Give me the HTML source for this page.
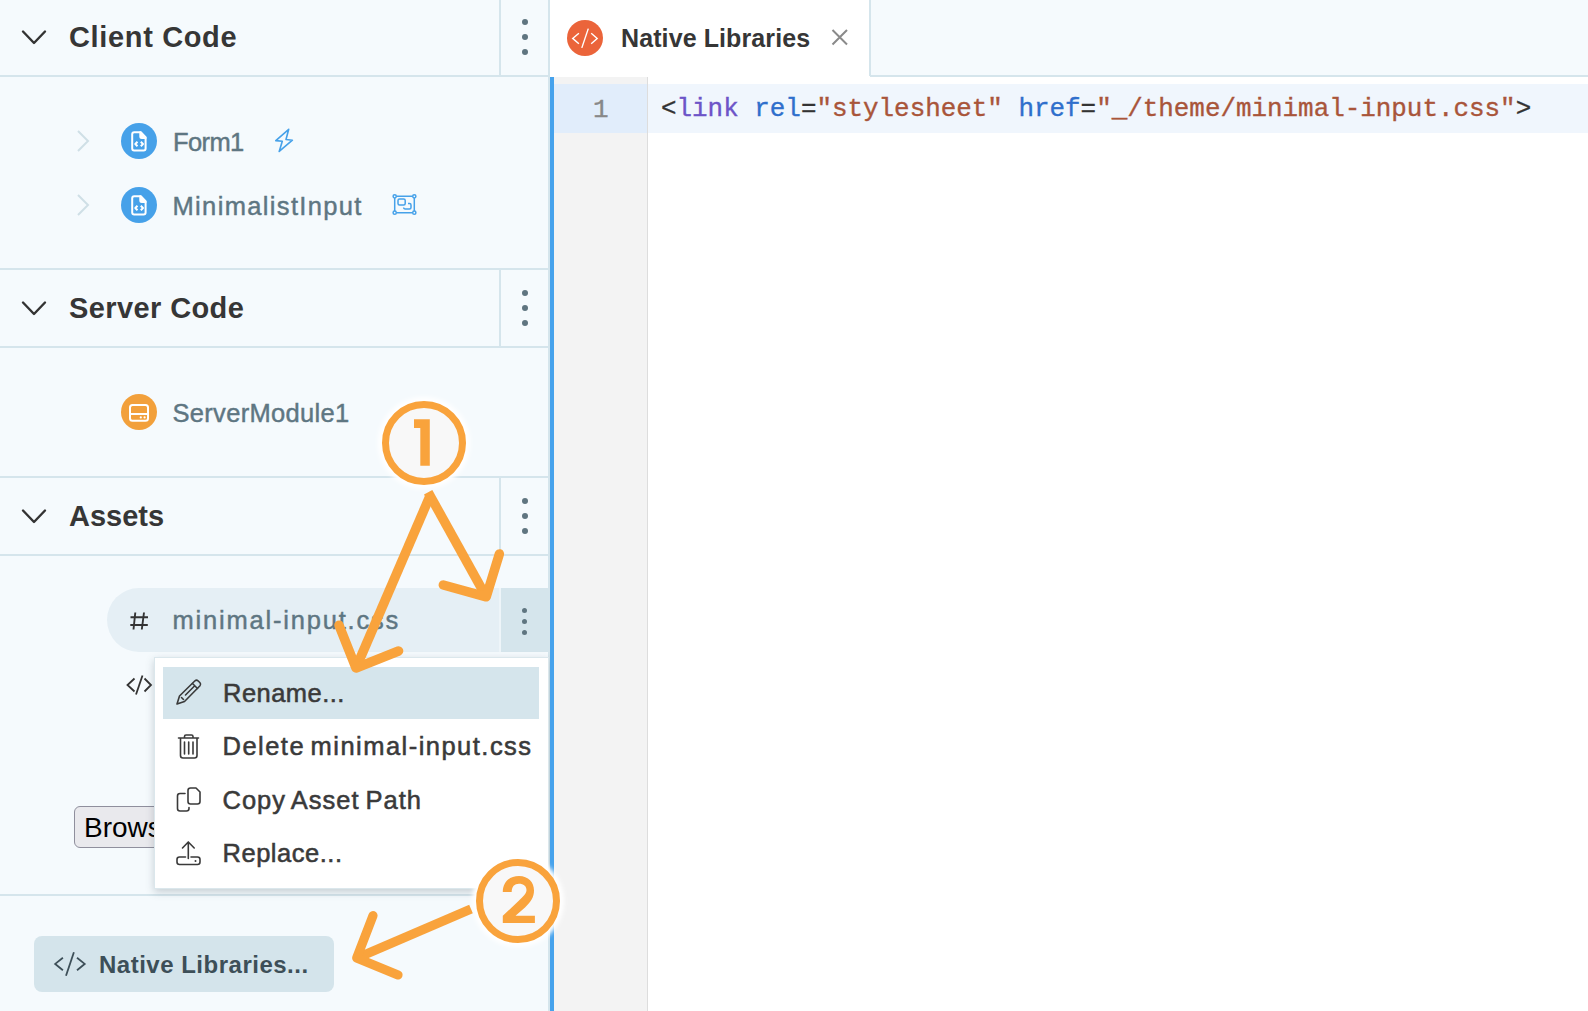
<!DOCTYPE html>
<html><head><meta charset="utf-8">
<style>
html,body{margin:0;padding:0;width:1588px;height:1011px;overflow:hidden;background:#fff;}
body{position:relative;font-family:"Liberation Sans",sans-serif;}
.a{position:absolute;}
.t{position:absolute;white-space:pre;line-height:1;}
.hl{position:absolute;background:#d5e5ec;}
.hdr{font-weight:700;font-size:29px;color:#363636;}
.item{font-size:25.5px;color:#5e7682;-webkit-text-stroke:0.45px #5e7682;}
.menu{font-size:25.5px;color:#3a3a3a;-webkit-text-stroke:0.55px #3a3a3a;}
.dot{position:absolute;width:6px;height:6px;border-radius:50%;background:#5f7580;}
.sdot{position:absolute;width:5px;height:5px;border-radius:50%;background:#5f7580;}
svg{position:absolute;overflow:visible;}
</style></head>
<body>
<!-- sidebar background -->
<div class="a" style="left:0;top:0;width:548px;height:1011px;background:#f5fafd;"></div>
<div class="hl" style="left:548px;top:0;width:2px;height:1011px;"></div>

<!-- Client Code header -->
<div class="hl" style="left:0;top:75px;width:548px;height:2px;"></div>
<div class="hl" style="left:499px;top:0;width:2px;height:75px;"></div>
<svg style="left:0;top:0" width="60" height="76"><polyline points="23,31.5 34,43 45,31.5" fill="none" stroke="#333" stroke-width="2.4" stroke-linecap="round" stroke-linejoin="round"/></svg>
<div class="t hdr" style="left:69px;top:22.5px;letter-spacing:0.65px;">Client Code</div>
<div class="dot" style="left:522px;top:19px;"></div>
<div class="dot" style="left:522px;top:34px;"></div>
<div class="dot" style="left:522px;top:49px;"></div>

<!-- Client items -->
<svg style="left:0;top:0" width="100" height="230">
 <polyline points="78,131 88,141 78,151" fill="none" stroke="#cfdfe6" stroke-width="2"/>
 <polyline points="78,195 88,205 78,215" fill="none" stroke="#cfdfe6" stroke-width="2"/>
</svg>
<div class="a" style="left:121px;top:123px;width:36px;height:36px;border-radius:50%;background:#46a1e9;"></div>
<div class="a" style="left:121px;top:187px;width:36px;height:36px;border-radius:50%;background:#46a1e9;"></div>
<svg style="left:0;top:0" width="160" height="230">
 <g fill="none" stroke="#fff" stroke-width="2" stroke-linejoin="round">
  <path d="M134.2,132.3 H140.8 L145.6,137.1 V148.4 Q145.6,150.4 143.6,150.4 H134.2 Q132.2,150.4 132.2,148.4 V134.3 Q132.2,132.3 134.2,132.3 Z"/>
  <path d="M140.3,132.3 V136.5 Q140.3,138 141.8,138 H145.6 Z" fill="#fff"/>
  <polyline points="137.5,141.8 135.3,144 137.5,146.2" stroke-width="2"/>
  <polyline points="140.8,141.8 143,144 140.8,146.2" stroke-width="2"/>
 </g>
 <g fill="none" stroke="#fff" stroke-width="2" stroke-linejoin="round" transform="translate(0,64)">
  <path d="M134.2,132.3 H140.8 L145.6,137.1 V148.4 Q145.6,150.4 143.6,150.4 H134.2 Q132.2,150.4 132.2,148.4 V134.3 Q132.2,132.3 134.2,132.3 Z"/>
  <path d="M140.3,132.3 V136.5 Q140.3,138 141.8,138 H145.6 Z" fill="#fff"/>
  <polyline points="137.5,141.8 135.3,144 137.5,146.2" stroke-width="2"/>
  <polyline points="140.8,141.8 143,144 140.8,146.2" stroke-width="2"/>
 </g>
</svg>
<div class="t item" style="left:173px;top:130px;letter-spacing:-0.6px;">Form1</div>
<div class="t item" style="left:172.5px;top:194px;letter-spacing:1.35px;">MinimalistInput</div>
<svg style="left:0;top:0" width="430" height="230">
 <path d="M288.7,129.3 L275.8,140.6 L282.3,141.3 L279.2,151.4 L292.4,140.2 L286,139.5 Z" fill="none" stroke="#46a1e9" stroke-width="1.6" stroke-linejoin="round"/>
 <g fill="none" stroke="#46a1e9" stroke-width="1.5">
  <path d="M396.5,196.3 H412.5 M414.3,198 V211 M412.5,212.7 H396.5 M394.7,211 V198"/>
  <circle cx="394.7" cy="196.3" r="1.6"/><circle cx="414.3" cy="196.3" r="1.6"/>
  <circle cx="394.7" cy="212.7" r="1.6"/><circle cx="414.3" cy="212.7" r="1.6"/>
  <rect x="398" y="199" width="7.2" height="6" rx="1.5"/>
  <path d="M408,203.6 H409.5 Q411,203.6 411,205 V207.5 Q411,209 409.5,209 H405 Q403.6,209 403.6,207.6"/>
 </g>
</svg>

<!-- Server Code header -->
<div class="hl" style="left:0;top:268px;width:548px;height:2px;"></div>
<div class="hl" style="left:0;top:346px;width:548px;height:2px;"></div>
<div class="hl" style="left:499px;top:268px;width:2px;height:78px;"></div>
<svg style="left:0;top:0" width="60" height="330"><polyline points="23,302.5 34,314 45,302.5" fill="none" stroke="#333" stroke-width="2.4" stroke-linecap="round" stroke-linejoin="round"/></svg>
<div class="t hdr" style="left:69px;top:293.5px;letter-spacing:0.4px;">Server Code</div>
<div class="dot" style="left:522px;top:290px;"></div>
<div class="dot" style="left:522px;top:305px;"></div>
<div class="dot" style="left:522px;top:320px;"></div>

<!-- Server items -->
<div class="a" style="left:121px;top:394px;width:36px;height:36px;border-radius:50%;background:#f2a03b;"></div>
<svg style="left:0;top:0" width="160" height="430">
 <g fill="none" stroke="#fff" stroke-width="2">
  <rect x="130" y="405" width="18" height="15.8" rx="2.5"/>
  <path d="M130,414 H148"/>
 </g>
 <circle cx="140.8" cy="417.4" r="1.1" fill="#fff"/><circle cx="144.6" cy="417.4" r="1.1" fill="#fff"/>
</svg>
<div class="t item" style="left:172.5px;top:401px;letter-spacing:0.31px;">ServerModule1</div>

<!-- Assets header -->
<div class="hl" style="left:0;top:476px;width:548px;height:2px;"></div>
<div class="hl" style="left:0;top:554px;width:548px;height:2px;"></div>
<div class="hl" style="left:499px;top:476px;width:2px;height:78px;"></div>
<svg style="left:0;top:0" width="60" height="540"><polyline points="23,510.5 34,522 45,510.5" fill="none" stroke="#333" stroke-width="2.4" stroke-linecap="round" stroke-linejoin="round"/></svg>
<div class="t hdr" style="left:69px;top:501.5px;">Assets</div>
<div class="dot" style="left:522px;top:498px;"></div>
<div class="dot" style="left:522px;top:513px;"></div>
<div class="dot" style="left:522px;top:528px;"></div>

<!-- asset row -->
<div class="a" style="left:107px;top:588px;width:393px;height:64px;border-radius:32px 0 0 32px;background:#e5eff5;"></div>
<div class="a" style="left:500px;top:588px;width:48px;height:64px;background:#d5e5ec;"></div>
<div class="a" style="left:499px;top:588px;width:1.5px;height:64px;background:#eef5f9;"></div>
<div class="sdot" style="left:522px;top:608px;"></div>
<div class="sdot" style="left:522px;top:619px;"></div>
<div class="sdot" style="left:522px;top:630px;"></div>
<svg style="left:0;top:0" width="160" height="700">
 <g fill="none" stroke="#333" stroke-width="2">
  <path d="M135.3,612.5 L133.5,629.5 M144,612.5 L141.8,629.5 M130.5,617.3 H148 M130.3,625 H147.8" stroke-width="1.9"/>
 </g>
 <g fill="none" stroke="#333" stroke-width="2">
  <polyline points="134.5,678.5 127.5,685 134.5,691.5" stroke-width="1.8"/>
  <path d="M142.5,675.5 L136,694.5" stroke-width="1.8"/>
  <polyline points="144.5,678.5 151,685 144.5,691.5" stroke-width="1.8"/>
 </g>
</svg>
<div class="t item" style="left:172.5px;top:608px;letter-spacing:1.8px;">minimal-input.css</div>

<!-- browse button -->
<div class="a" style="left:74px;top:806px;width:120px;height:40px;border:1.3px solid #8f8f9d;border-radius:6px;background:#e9e9ed;"></div>
<div class="t" style="left:84px;top:813.5px;font-size:28px;color:#000;">Browse...</div>

<!-- bottom border -->
<div class="hl" style="left:0;top:894px;width:548px;height:2px;"></div>

<!-- Native Libraries button -->
<div class="a" style="left:34px;top:936px;width:300px;height:56px;border-radius:8px;background:#d4e4eb;"></div>
<svg style="left:0;top:0" width="100" height="1000">
 <g fill="none" stroke="#3d4f58" stroke-width="1.8">
  <polyline points="62.9,957.7 55.2,963.9 62.9,970.2"/>
  <path d="M73.9,952.2 L66,975.7"/>
  <polyline points="77,957.7 84.7,963.9 77,970.2"/>
 </g>
</svg>
<div class="t" style="left:99px;top:953px;font-size:24px;font-weight:700;color:#3d4f58;letter-spacing:0.5px;">Native Libraries...</div>

<!-- context menu -->
<div class="a" style="left:154px;top:657px;width:393px;height:230px;background:#fff;border:1px solid #dbe7ec;box-shadow:0 3px 8px rgba(60,80,90,0.25);"></div>
<div class="a" style="left:163px;top:667px;width:376px;height:52px;background:#d5e5ec;"></div>
<div class="t menu" style="left:223px;top:680.5px;letter-spacing:0.46px;">Rename...</div>
<div class="t menu" style="left:222.5px;top:734px;letter-spacing:1.47px;word-spacing:-3px;">Delete minimal-input.css</div>
<div class="t menu" style="left:222.5px;top:787.5px;letter-spacing:1.0px;word-spacing:-2px;">Copy Asset Path</div>
<div class="t menu" style="left:222.5px;top:841px;letter-spacing:0.52px;">Replace...</div>
<svg style="left:0;top:0" width="210" height="870">
 <g fill="none" stroke="#3a3a3a" stroke-width="1.6" stroke-linejoin="round" stroke-linecap="round">
  <path d="M177,704 L179.5,696 L195,680.8 Q196.5,679.5 198,680.8 L200,682.8 Q201.3,684.3 200,685.8 L184.5,701.5 Z"/>
  <path d="M192.5,683.5 L197.5,688.5 M181.5,697.5 L183.5,699.5 M185.5,695 L194,686.5"/>
  <path d="M178.5,738 H198.5 M184.5,738 V736.5 Q184.5,735 186,735 H191.5 Q193,735 193,736.5 V738 M180.5,738 V755.5 Q180.5,758 183,758 H194.5 Q197,758 197,755.5 V738 M184.5,742 V754 M188.7,742 V754 M193,742 V754"/>
  <path d="M185,793.5 H180 Q177.5,793.5 177.5,796 V808.5 Q177.5,811 180,811 H186.5 Q189,811 189,808.5 V807.5"/>
  <path d="M190.5,788 H196 L200,792 V801.5 Q200,804 197.5,804 H190.5 Q188,804 188,801.5 V790.5 Q188,788 190.5,788 Z"/>
  <path d="M188.3,858.5 V842 M182.5,848 L188.3,842 L194.2,848 M185.5,857 H179.5 Q177,857 177,859.5 V862 Q177,864.5 179.5,864.5 H197.5 Q200,864.5 200,862 V859.5 Q200,857 197.5,857 H191"/>
 </g>
 <circle cx="195.5" cy="861" r="1" fill="#3a3a3a"/>
</svg>

<!-- Editor -->
<div class="a" style="left:550px;top:0;width:1038px;height:75px;background:#f5fafd;"></div>
<div class="hl" style="left:550px;top:75px;width:1038px;height:2px;"></div>
<div class="a" style="left:550px;top:0;width:320px;height:77px;background:#fff;"></div>
<div class="hl" style="left:869px;top:0;width:2px;height:76px;"></div>
<div class="a" style="left:567px;top:20px;width:36px;height:36px;border-radius:50%;background:#eb643a;"></div>
<svg style="left:0;top:0" width="610" height="60">
 <g fill="none" stroke="#fff" stroke-width="1.4">
  <polyline points="578.9,33.3 572.7,38.4 578.9,43.7"/>
  <path d="M588.3,28.6 L581.8,47.9"/>
  <polyline points="591.2,33.3 597.2,38.4 591.2,43.7"/>
 </g>
</svg>
<div class="t" style="left:621px;top:26px;font-size:25px;font-weight:700;color:#363636;letter-spacing:0.1px;">Native Libraries</div>
<svg style="left:0;top:0" width="860" height="60">
 <path d="M832.5,30 L847,44.5 M847,30 L832.5,44.5" fill="none" stroke="#8a8a8a" stroke-width="2"/>
</svg>

<div class="a" style="left:550px;top:77px;width:4px;height:934px;background:#46a2ec;"></div>
<div class="a" style="left:554px;top:77px;width:93px;height:934px;background:#f3f3f3;"></div>
<div class="a" style="left:647px;top:77px;width:1px;height:934px;background:#dddddd;"></div>
<div class="a" style="left:554px;top:84px;width:93px;height:49px;background:#e1edfb;"></div>
<div class="a" style="left:648px;top:84px;width:940px;height:49px;background:#f0f6fd;"></div>
<div class="t" style="left:593px;top:97px;font-family:'Liberation Mono',monospace;font-size:26px;color:#888;-webkit-text-stroke:0.4px #888;">1</div>
<div class="t" style="left:661px;top:96.5px;font-family:'Liberation Mono',monospace;font-size:25.9px;color:#333;-webkit-text-stroke:0.35px;">&lt;<span style="color:#6d54c8">link</span> <span style="color:#2f6fcc">rel</span>=<span style="color:#a9553a">"stylesheet"</span> <span style="color:#2f6fcc">href</span>=<span style="color:#a9553a">"_/theme/minimal-input.css"</span>&gt;</div>

<!-- annotations -->
<svg style="left:0;top:0" width="1588" height="1011">
 <defs>
  <filter id="glow" x="-30%" y="-30%" width="160%" height="160%">
   <feGaussianBlur stdDeviation="2"/>
  </filter>
 </defs>
 <circle cx="424" cy="443" r="46" fill="#fff" opacity="1" filter="url(#glow)"/>
 <circle cx="518" cy="901" r="46" fill="#fff" opacity="1" filter="url(#glow)"/>
 <g fill="#f8f8f8" stroke="#f9a33c" stroke-width="7">
  <circle cx="424" cy="443" r="38.5"/>
  <circle cx="518" cy="901" r="38.5"/>
 </g>
 <path d="M414,419.2 H429.8 V465.8 H420.3 V427.9 H414 Z" fill="#f9a33c"/>
 <path d="M502.8,891.9 C502.8,882 509.5,876.1 519,876.1 C528.5,876.1 534,882.5 534,890.5 C534,897 531,901.5 525,907.5 L515.5,915.8 H534.9 V923.1 H502.8 V915.8 L518.5,901 C523.5,896 526.5,893.5 526.5,890 C526.5,886 523.5,883.7 519,883.7 C514.5,883.7 511.7,886.5 511.7,891.9 Z" fill="#f9a33c"/>
 <g fill="none" stroke="#f9a33c" stroke-width="9.5" stroke-linecap="round" stroke-linejoin="round">
  <path d="M429.9,496.2 L356,668" stroke-linecap="butt"/>
  <path d="M428.15,492.25 L486.2,596.8" stroke-linecap="butt"/>
  <polyline points="339,625.2 356,668 398.6,651"/>
  <polyline points="499.4,553.9 486.2,596.8 443.3,585"/>
  <path d="M471,909 L357,958" stroke-linecap="butt" stroke-width="9.2"/>
  <polyline points="373,915.6 356.7,958 398,974.9" stroke-width="9.2"/>
 </g>
</svg>
</body></html>
